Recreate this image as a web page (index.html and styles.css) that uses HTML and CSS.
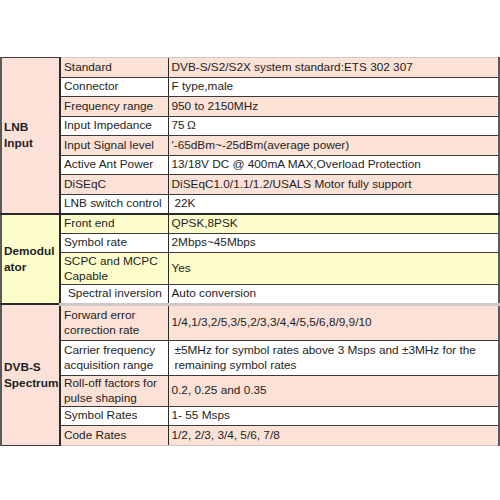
FILE: index.html
```html
<!DOCTYPE html>
<html>
<head>
<meta charset="utf-8">
<link rel="stylesheet" href="styles.css">
</head>
<body>
<div class="page">
<table class="spec">
<colgroup><col class="c1"><col class="c2"><col class="c3"></colgroup>
<tbody class="lnb">
<tr class="p"><th rowspan="8" class="sec">LNB<br>Input</th><td>Standard</td><td>DVB-S/S2/S2X system standard:ETS 302 307</td></tr>
<tr><td>Connector</td><td>F type,male</td></tr>
<tr class="p"><td>Frequency range</td><td>950 to 2150MHz</td></tr>
<tr><td>Input Impedance</td><td>75&thinsp;Ω</td></tr>
<tr class="p"><td>Input Signal level</td><td>'-65dBm~-25dBm(average power)</td></tr>
<tr><td>Active Ant Power</td><td>13/18V DC @ 400mA MAX,Overload Protection</td></tr>
<tr class="p"><td>DiSEqC</td><td>DiSEqC1.0/1.1/1.2/USALS Motor fully support</td></tr>
<tr class="last"><td>LNB switch control</td><td class="ind">22K</td></tr>
</tbody>
<tbody class="demod">
<tr class="y first"><th rowspan="4" class="sec">Demodul<br>ator</th><td>Front end</td><td>QPSK,8PSK</td></tr>
<tr><td>Symbol rate</td><td>2Mbps~45Mbps</td></tr>
<tr class="y h32"><td>SCPC and MCPC Capable</td><td>Yes</td></tr>
<tr class="last"><td class="ind2">Spectral inversion</td><td>Auto conversion</td></tr>
</tbody>
<tbody class="dvb">
<tr class="p first h36"><th rowspan="5" class="sec">DVB-S<br>Spectrum</th><td>Forward error correction rate</td><td>1/4,1/3,2/5,3/5,2/3,3/4,4/5,5/6,8/9,9/10</td></tr>
<tr class="h35"><td>Carrier frequency acquisition range</td><td class="ind">±5MHz for symbol rates above 3 Msps and ±3MHz for the remaining symbol rates</td></tr>
<tr class="p h30"><td>Roll-off factors for pulse shaping</td><td>0.2, 0.25 and 0.35</td></tr>
<tr><td>Symbol Rates</td><td>1- 55 Msps</td></tr>
<tr class="p end"><td>Code Rates</td><td>1/2, 2/3, 3/4, 5/6, 7/8</td></tr>
</tbody>
</table>
</div>
</body>
</html>
```
FILE: styles.css
```css
html, body {
  margin: 0;
  padding: 0;
  background: #ffffff;
}
.page {
  padding-top: 57px;
}
.spec {
  width: 498px;
  table-layout: fixed;
  border-collapse: collapse;
  font-family: "Liberation Sans", Arial, sans-serif;
  font-size: 11.8px;
  color: #1e1e1e;
  border-left: 2px solid #5a5a5a;
  border-right: 2px solid #5a5a5a;
  border-top: 1px solid #d0c8c4;
  border-bottom: 1px solid #c8c8c8;
}
.c1 { width: 59px; }
.c2 { width: 108px; }
.c3 { width: 331px; }
.spec td, .spec th {
  padding: 0 2px 0 3px;
  line-height: 15px;
  vertical-align: middle;
  text-align: left;
  border-top: 1px solid #3a3a3a;
  border-bottom: 1px solid #3a3a3a;
  border-left: 1px solid #2a2a2a;
  white-space: normal;
}
.spec tr { height: 19.5px; }
.spec tr:first-child td { border-top-color: #d0c8c4; }
.spec .p td { background: #fbe1d6; }
.spec .y td { background: #fdfccb; }
.spec .sec {
  font-weight: bold;
  line-height: 16px;
  padding: 0 0 0 2px;
  border-right: 2px solid #2a2a2a;
}
.lnb .sec { background: #fbe1d7; border-bottom: 2px solid #2a2a2a; }
.demod .sec { background: #fdfccb; border-bottom: 2px solid #2a2a2a; }
.dvb .sec { background: #fbe1d7; }
.spec .last td { border-bottom: 2px solid #2a2a2a; }
.spec .first td { border-top: 2px solid #2a2a2a; }
.dvb .first td { border-top: 3px solid #2a2a2a; }
.spec .end td { border-bottom-color: #c8c8c8; height: 19px; }
.spec .h36 { height: 36px; }
.spec .h35 { height: 35px; }
.spec .h30 { height: 30px; }
.spec .h32 { height: 32px; }
.spec .ind { padding-left: 6px; }
.spec .ind2 { padding-left: 7px; padding-right: 0; white-space: nowrap; }
```
